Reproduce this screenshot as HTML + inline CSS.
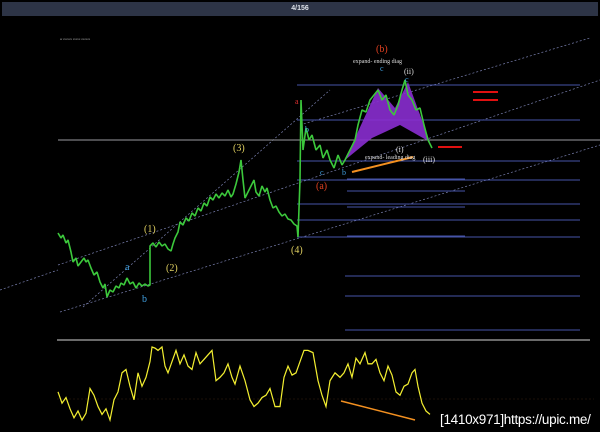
<!DOCTYPE html>
<html><head><meta charset="utf-8"><style>
html,body{margin:0;padding:0;background:#000;width:600px;height:432px;overflow:hidden;font-family:"Liberation Sans",sans-serif}
.bar{position:absolute;left:2px;top:2px;width:596px;height:14px;background:#2d3446;color:#dfe3ea;font-size:7px;text-align:center;line-height:14px;font-weight:bold}
svg{position:absolute;left:0;top:0}
.wm{position:absolute;left:440px;top:412px;color:#fff;font-size:13.5px;font-family:"Liberation Sans",sans-serif;letter-spacing:-0.3px}
</style></head><body>
<svg width="600" height="432" viewBox="0 0 600 432">
<g stroke="#7a80b0" stroke-width="0.7" stroke-dasharray="2,2" fill="none">
<line x1="58" y1="265" x2="600" y2="80"/>
<line x1="60" y1="312" x2="600" y2="145"/>
<line x1="83" y1="307" x2="330" y2="90"/>
<line x1="300" y1="125" x2="590" y2="38"/>
<line x1="0" y1="290" x2="58" y2="270"/>
</g>
<line x1="58" y1="140" x2="600" y2="140" stroke="#9a9aa0" stroke-width="1"/>
<g stroke="#4654a8" stroke-width="1">
<line x1="297" y1="85" x2="580" y2="85"/>
<line x1="297" y1="120" x2="580" y2="120"/>
<line x1="297" y1="161" x2="580" y2="161"/>
<line x1="297" y1="180" x2="580" y2="180"/>
<line x1="297" y1="204" x2="580" y2="204"/>
<line x1="297" y1="220" x2="580" y2="220"/>
<line x1="297" y1="237" x2="580" y2="237"/>
<line x1="345" y1="276" x2="580" y2="276"/>
<line x1="345" y1="296" x2="580" y2="296"/>
<line x1="345" y1="330" x2="580" y2="330"/>
<line x1="347" y1="179" x2="465" y2="179"/>
<line x1="347" y1="191" x2="465" y2="191"/>
<line x1="347" y1="207" x2="465" y2="207"/>
<line x1="347" y1="236" x2="465" y2="236"/>
</g>
<g stroke="#e01010" stroke-width="2"><line x1="473" y1="92" x2="498" y2="92"/><line x1="473" y1="100" x2="498" y2="100"/><line x1="438" y1="147" x2="462" y2="147"/></g>
<polygon points="345,160 378,88 395,108 408,82 430,142 400,125 372,138" fill="#8a2ed0" opacity="0.9"/>
<polyline fill="none" stroke="#3cc83c" stroke-width="1.6" stroke-linejoin="bevel" points="58,233 61,238 63,235 66,243 68,240 71,252 73,262 76,258 78,266 81,262 84,258 86,262 88,260 91,268 94,275 97,272 100,282 103,288 105,284 107,297 110,290 113,292 116,286 119,288 121,283 124,285 127,278 130,284 133,282 136,288 139,283 142,286 145,284 148,286 150,285 150,246 153,243 156,247 159,242 162,246 165,244 168,249 171,251 173,244 175,238 178,232 180,222 183,225 186,218 189,221 192,213 195,216 198,208 201,211 204,203 207,206 210,197 213,200 216,194 219,198 222,193 225,196 228,190 231,197 233,194 236,184 239,172 241,160 243,180 245,198 248,192 251,186 254,180 256,192 259,196 262,186 265,192 267,188 270,200 273,208 276,206 279,212 282,216 285,214 288,219 291,220 294,224 297,226 298,237 300,180 301,100 303,150 306,128 309,140 312,135 316,150 320,145 323,158 327,150 330,160 334,168 338,155 342,165 345,160 350,150 355,140 358,125 362,110 366,112 370,100 374,95 378,90 382,100 386,95 390,110 394,115 398,105 402,90 405,80 408,95 412,100 416,110 420,108 424,125 428,140 432,148"/>
<line x1="352" y1="172" x2="413" y2="157" stroke="#f39020" stroke-width="2"/>
<g font-family="Liberation Serif,serif" font-size="10">
<text x="376" y="52" fill="#e04020">(b)</text>
<text x="233" y="151" fill="#e0d060">(3)</text>
<text x="144" y="232" fill="#e0d060">(1)</text>
<text x="166" y="271" fill="#e0d060">(2)</text>
<text x="291" y="253" fill="#e0d060">(4)</text>
<text x="316" y="189" fill="#e04020">(a)</text>
<text x="125" y="270" fill="#40a0e0">a</text>
<text x="142" y="302" fill="#40a0e0">b</text>
<text x="305" y="132" fill="#40a0e0" font-size="8">b</text>
<text x="320" y="175" fill="#40a0e0" font-size="8">c</text>
<text x="342" y="175" fill="#40a0e0" font-size="8">b</text>
<text x="380" y="71" fill="#40a0e0" font-size="8">c</text>
<text x="405" y="82" fill="#40a0e0" font-size="8">c</text>
<text x="295" y="104" fill="#e03030" font-size="8">a</text>
<text x="423" y="162" fill="#ddd" font-size="8">(iii)</text>
<text x="404" y="74" fill="#ddd" font-size="8">(ii)</text>
<text x="396" y="152" fill="#ddd" font-size="8">(i)</text>
</g>
<g font-family="Liberation Serif,serif" font-size="6" fill="#ddd">
<text x="353" y="63">expand- ending diag</text>
<text x="365" y="159">expand- leading diag</text>
</g>
<text x="60" y="40" fill="#aaa" font-size="3">w xxxxxx xxxxx xxxxxx</text>
<line x1="57" y1="340" x2="590" y2="340" stroke="#aaa" stroke-width="1.3"/>
<line x1="57" y1="399" x2="594" y2="399" stroke="#3a2010" stroke-width="0.6" stroke-dasharray="2,2"/>
<g transform="translate(0,347) scale(1,1.123) translate(0,-345)">
<polyline fill="none" stroke="#f2ee30" stroke-width="1.2" points="58,385 62,395 66,390 70,400 74,408 78,402 82,410 86,404 90,382 94,388 98,398 102,405 106,400 110,410 114,392 118,385 122,368 126,365 130,380 134,392 138,368 142,380 146,372 150,358 152,345 155,346 158,348 162,345 165,362 168,368 172,358 176,348 180,360 184,352 188,362 192,365 196,350 200,360 204,356 208,352 212,348 216,375 220,372 224,368 228,360 232,372 235,378 240,362 245,375 250,392 254,398 258,395 262,390 266,388 270,382 275,398 280,398 284,372 288,362 292,370 296,368 300,358 304,348 308,348 313,350 318,375 322,388 326,398 330,375 335,368 340,372 344,368 348,360 352,372 356,355 360,360 365,350 368,360 372,360 376,356 380,368 384,375 388,362 392,370 396,385 400,388 404,380 408,378 412,368 415,365 418,380 422,395 426,402 430,405"/>
</g>
<line x1="341" y1="401" x2="415" y2="420" stroke="#f39020" stroke-width="1.5"/>
</svg>
<div class="bar">4/156</div>
<div class="wm">[1410x971]https://upic.me/</div>
</body></html>
